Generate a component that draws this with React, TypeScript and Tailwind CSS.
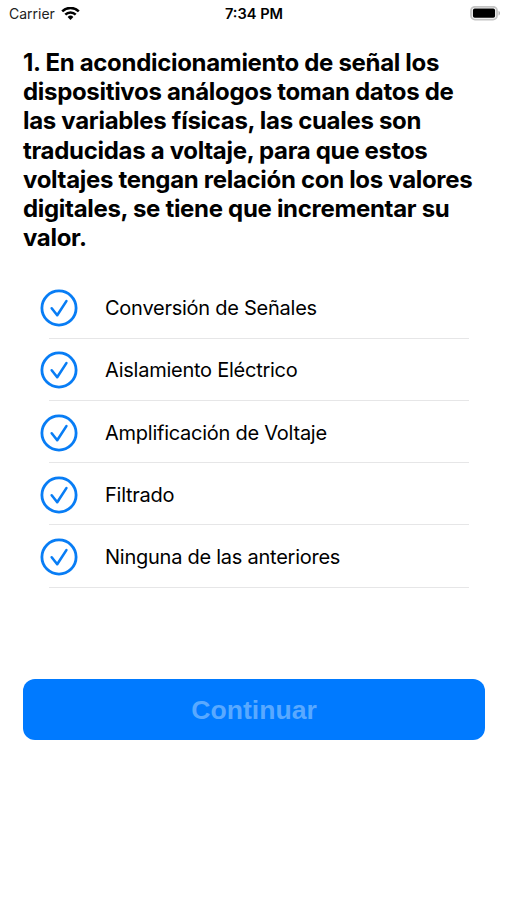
import React from 'react';

const options = [
  'Conversión de Señales',
  'Aislamiento Eléctrico',
  'Amplificación de Voltaje',
  'Filtrado',
  'Ninguna de las anteriores',
];

const questionLines = [
  '1. En acondicionamiento de señal los',
  'dispositivos análogos toman datos de',
  'las variables físicas, las cuales son',
  'traducidas a voltaje, para que estos',
  'voltajes tengan relación con los valores',
  'digitales, se tiene que incrementar su',
  'valor.',
];

const WifiIcon = () => (
  <svg width="19" height="14" viewBox="0 0 19 14" fill="none" stroke="black" strokeWidth="2.5">
    <path d="M1.2 4.4a11.7 11.7 0 0 1 16.6 0" />
    <path d="M4.3 7.6a7.3 7.3 0 0 1 10.4 0" />
    <path d="M9.5 12.9 6.6 9.9a4.1 4.1 0 0 1 5.8 0Z" fill="black" stroke="none" />
  </svg>
);

const BatteryIcon = () => (
  <svg width="31" height="15" viewBox="0 0 31 15">
    <rect x="1" y="0.8" width="26" height="12.8" rx="4" fill="none" stroke="#c4c4c4" strokeWidth="1.8" />
    <rect x="2.9" y="2.6" width="22.2" height="9.2" rx="1.8" />
    <path d="M28.5 4.8v4.8c2-.7 2-4.1 0-4.8Z" fill="#b5b5b5" />
  </svg>
);

const CheckIcon = () => (
  <svg width="38" height="38" viewBox="0 0 38 38" fill="none" stroke="#087df5">
    <circle cx="19" cy="19" r="17.1" strokeWidth="2.8" />
    <path d="m11.7 19.3 5.5 6.9 9.2-14.1" strokeWidth="2.6" strokeLinecap="round" strokeLinejoin="round" />
  </svg>
);

const StatusBar = () => (
  <header className="grid h-[27px] grid-cols-3 items-center pr-[6px] pl-[9px] text-[14px]">
    <div className="flex items-center gap-[6px] text-[#222]">
      <span>Carrier</span>
      <WifiIcon />
    </div>
    <span className="pt-[2px] pr-[2px] text-center text-[14.6px] font-semibold">7:34 PM</span>
    <div className="flex justify-end">
      <BatteryIcon />
    </div>
  </header>
);

export default function App() {
  return (
    <div className="h-[900px] overflow-hidden bg-white font-['Inter',sans-serif] text-black">
      <StatusBar />
      <main className="pr-[22px] pl-[23px] pt-[21px]">
        <h1 className="text-[24px] leading-[29.2px] font-bold tracking-[-0.31px] whitespace-nowrap">
          {questionLines.map((line) => (
            <span key={line} className="block">{line}</span>
          ))}
        </h1>
        <ul className="mt-[24px] pr-[16px] pl-[17px]">
          {options.map((option) => (
            <li key={option} className="h-[62.25px]">
              <div className="flex h-[61.25px] items-center gap-[27px] pt-[2px] text-[20px] tracking-[-0.25px]">
                <CheckIcon />
                <span>{option}</span>
              </div>
              <div className="ml-[9px] h-px bg-[#e6e6e7]" />
            </li>
          ))}
        </ul>
        <button className="mt-[91.8px] h-[61px] w-full rounded-[12px] bg-[#007aff] pt-[2px] font-['Liberation_Sans',sans-serif] text-[26.6px] font-bold text-[#59a9ff]">
          Continuar
        </button>
      </main>
    </div>
  );
}
